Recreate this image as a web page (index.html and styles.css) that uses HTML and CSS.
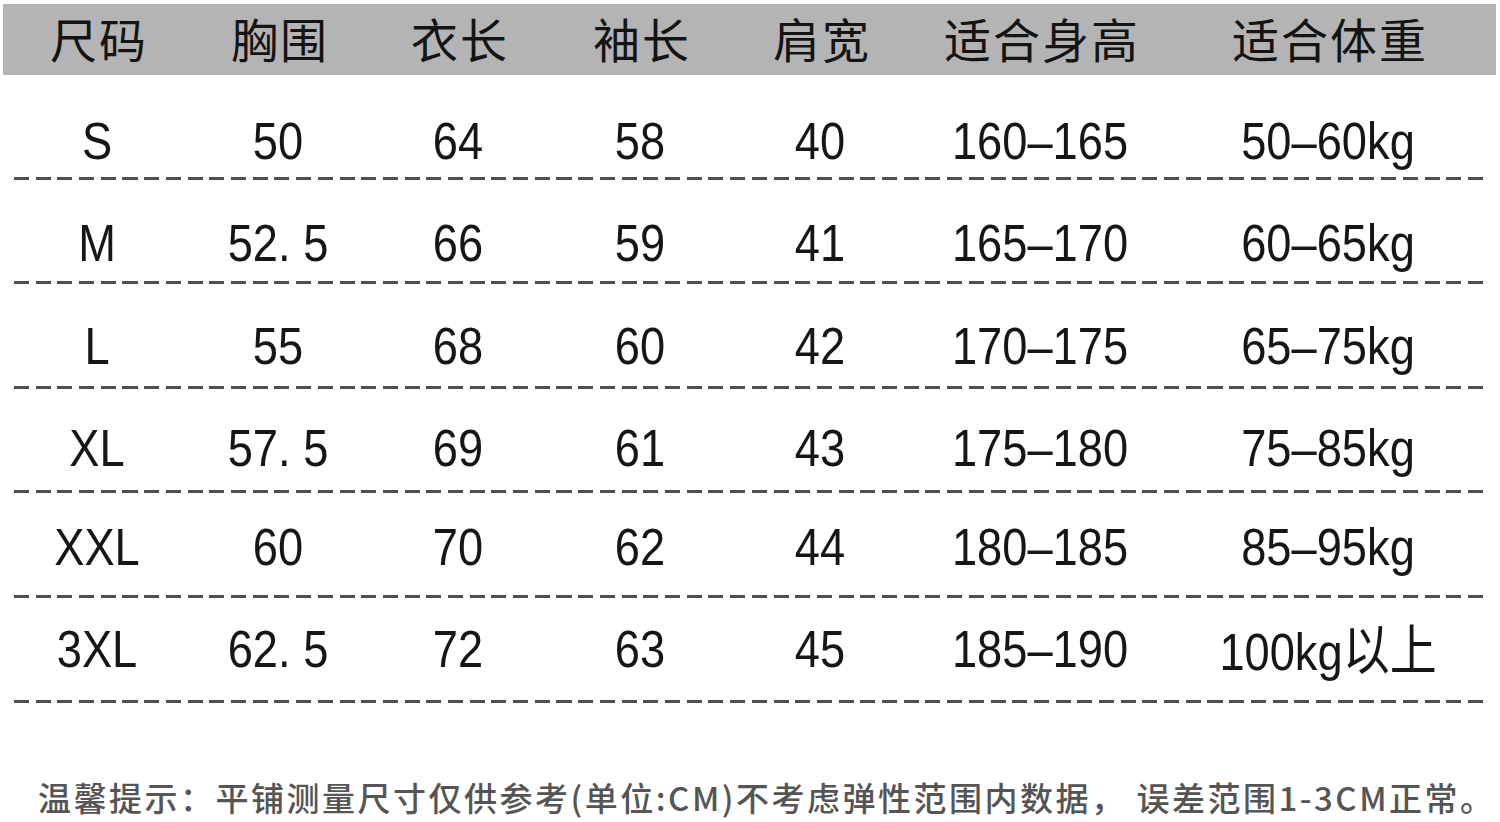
FILE: index.html
```html
<!DOCTYPE html>
<html lang="zh-CN">
<head>
<meta charset="utf-8">
<title>尺码表</title>
<link rel="stylesheet" href="styles.css">
</head>
<body>
<div class="page">
  <div class="head">
    <div class="cell">尺码</div>
    <div class="cell">胸围</div>
    <div class="cell">衣长</div>
    <div class="cell">袖长</div>
    <div class="cell">肩宽</div>
    <div class="cell">适合身高</div>
    <div class="cell">适合体重</div>
  </div>

  <div class="row r1">
    <div class="cell">S</div><div class="cell">50</div><div class="cell">64</div><div class="cell">58</div><div class="cell">40</div><div class="cell">160–165</div><div class="cell">50–60kg</div>
  </div>
  <div class="dash"></div>
  <div class="row r2">
    <div class="cell">M</div><div class="cell">52. 5</div><div class="cell">66</div><div class="cell">59</div><div class="cell">41</div><div class="cell">165–170</div><div class="cell">60–65kg</div>
  </div>
  <div class="dash"></div>
  <div class="row r3">
    <div class="cell">L</div><div class="cell">55</div><div class="cell">68</div><div class="cell">60</div><div class="cell">42</div><div class="cell">170–175</div><div class="cell">65–75kg</div>
  </div>
  <div class="dash"></div>
  <div class="row r4">
    <div class="cell">XL</div><div class="cell">57. 5</div><div class="cell">69</div><div class="cell">61</div><div class="cell">43</div><div class="cell">175–180</div><div class="cell">75–85kg</div>
  </div>
  <div class="dash"></div>
  <div class="row r5">
    <div class="cell">XXL</div><div class="cell">60</div><div class="cell">70</div><div class="cell">62</div><div class="cell">44</div><div class="cell">180–185</div><div class="cell">85–95kg</div>
  </div>
  <div class="dash"></div>
  <div class="row r6">
    <div class="cell">3XL</div><div class="cell">62. 5</div><div class="cell">72</div><div class="cell">63</div><div class="cell">45</div><div class="cell">185–190</div><div class="cell">100kg<span class="cjk">以上</span></div>
  </div>
  <div class="dash"></div>

  <p class="note">温馨提示：平铺测量尺寸仅供参考(单位:CM)不考虑弹性范围内数据， 误差范围1-3CM正常。</p>
</div>
</body>
</html>
```

FILE: styles.css
```css
html, body {
  margin: 0;
  padding: 0;
  background: #ffffff;
}

.page {
  width: 1500px;
  height: 822px;
  overflow: hidden;
  padding-top: 4px;
  box-sizing: border-box;
}

.head,
.row {
  display: grid;
  grid-template-columns: 194px 168px 192px 172px 188px 252px 324px;
  align-items: center;
}

.head {
  margin: 0 4px 0 3px;
  height: 71px;
  background: #b4b4b4;
  font-family: "Noto Sans CJK SC", sans-serif;
  font-size: 47px;
  font-weight: 400;
  letter-spacing: 2px;
  color: #141414;
  line-height: 1;
}

.head .cell {
  text-align: center;
  margin-left: -2px;
  padding-bottom: 4px;
  white-space: nowrap;
}

.row {
  height: 101.6px;
  box-sizing: border-box;
  font-family: "Liberation Sans", Arial, sans-serif;
  font-size: 52px;
  color: #161616;
  line-height: 1;
}

.r1 { padding-top: 31px; }
.r2 { padding-top: 26px; }
.r3 { padding-top: 22px; }
.r4 { padding-top: 16px; }
.r5 { padding-top: 6px; }
.r6 { padding-top: 0; }

.row .cell {
  text-align: center;
  white-space: nowrap;
  transform: scaleX(0.87);
}

.cjk {
  font-family: "Noto Sans CJK SC", sans-serif;
  font-size: 54px;
}

.dash {
  margin-left: 14px;
  width: 1476px;
  height: 3px;
  background: repeating-linear-gradient(to right, #4e4e4e 0 15px, transparent 15px 21.7px);
}

.note {
  margin: 78px 0 0 38px;
  font-family: "Noto Sans CJK SC", sans-serif;
  font-size: 33px;
  font-weight: 500;
  letter-spacing: 2.5px;
  color: #555555;
  line-height: 1;
  white-space: nowrap;
}
```
